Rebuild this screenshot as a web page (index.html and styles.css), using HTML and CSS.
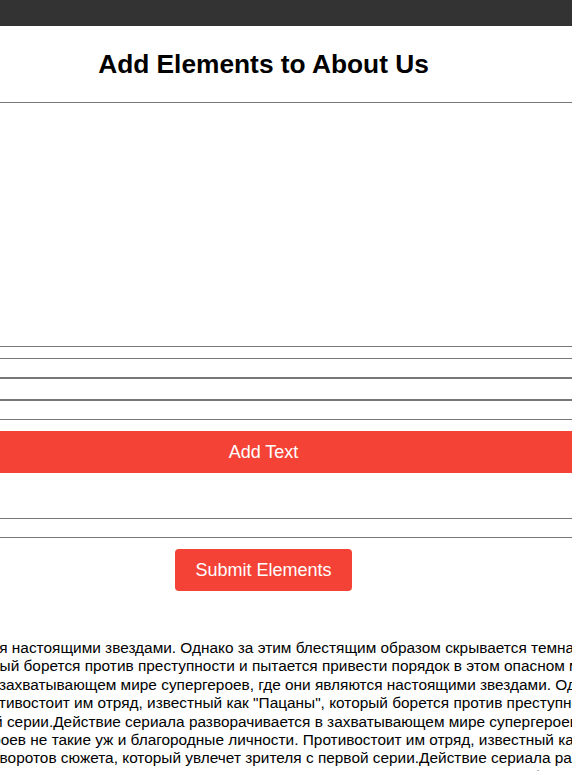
FILE: index.html
```html
<!DOCTYPE html>
<html lang="ru">
<head>
<meta charset="utf-8">
<title>Add Elements to About Us</title>
<link rel="stylesheet" href="styles.css">
</head>
<body>
<div class="topbar"></div>
<main class="panel">
  <h2 class="title">Add Elements to About Us</h2>
  <div class="preview"></div>
  <div class="field field-thin"></div>
  <div class="field field-thick"></div>
  <div class="rule"></div>
  <button class="add-btn" type="button">Add Text</button>
  <div class="field field-text"></div>
  <div class="submit-row">
    <button class="submit-btn" type="button">Submit Elements</button>
  </div>
</main>
<section class="about-text">
  <div class="line l1">являются настоящими звездами. Однако за этим блестящим образом скрывается темная сторона - большинство</div>
  <div class="line l2">который борется против преступности и пытается привести порядок в этом опасном мире. Сериал полон</div>
  <div class="line l3">в захватывающем мире супергероев, где они являются настоящими звездами. Однако за этим блестящим</div>
  <div class="line l4">Противостоит им отряд, известный как "Пацаны", который борется против преступности и пытается</div>
  <div class="line l5">первой серии.Действие сериала разворачивается в захватывающем мире супергероев, где они являются</div>
  <div class="line l6">супергероев не такие уж и благородные личности. Противостоит им отряд, известный как "Пацаны"</div>
  <div class="line l7">поворотов сюжета, который увлечет зрителя с первой серии.Действие сериала разворачивается в</div>
  <div class="line l8">мире супергероев, где они являются настоящими звездами. Однако за этим блестящим образом</div>
</section>
</body>
</html>
```
FILE: styles.css
```css
html, body {
  margin: 0;
  padding: 0;
  overflow: hidden;
  background: #fff;
}

body {
  font-family: "Liberation Sans", Arial, sans-serif;
  color: #000;
}

.topbar {
  height: 26px;
  background: #333;
}

.panel {
  width: 1000px;
  margin-left: -236.5px;
  display: flex;
  flex-direction: column;
}

.title {
  margin: 0;
  padding: 23px 0 23px;
  font-size: 26.3px;
  line-height: 30px;
  font-weight: bold;
  text-align: center;
  border-bottom: 1px solid #777;
}

.preview {
  height: 243px;
}

.field {
  border-top: 1px solid #777;
  border-bottom: 1px solid #777;
}

.field-thin {
  height: 11px;
}

.field-thick {
  margin-top: 18px;
  height: 20px;
  border-top-width: 2px;
  border-bottom-width: 2px;
}

.rule {
  margin-top: 18px;
  border-top: 1px solid #777;
}

.add-btn {
  margin-top: 11px;
  height: 42px;
  border: 0;
  padding: 0;
  background: #f44336;
  color: #fff;
  font-family: "Liberation Sans", Arial, sans-serif;
  font-size: 18px;
  cursor: pointer;
}

.field-text {
  margin-top: 45px;
  height: 18px;
}

.submit-row {
  margin-top: 11px;
  display: flex;
  justify-content: center;
}

.submit-btn {
  height: 42px;
  width: 177px;
  padding: 0;
  border: 0;
  border-radius: 4px;
  background: #f44336;
  color: #fff;
  font-family: "Liberation Sans", Arial, sans-serif;
  font-size: 18px;
  cursor: pointer;
}

.about-text {
  margin-top: 48px;
  font-size: 15.4px;
  line-height: 18.4px;
  color: #000;
}

.line {
  white-space: nowrap;
}

.l1 { text-indent: -60px; }
.l2 { text-indent: -39.5px; }
.l3 { text-indent: -13.5px; }
.l4 { text-indent: -29px; }
.l5 { text-indent: -48px; }
.l6 { text-indent: -62.5px; }
.l7 { text-indent: -17.3px; }
.l8 { text-indent: -19px; }
```
